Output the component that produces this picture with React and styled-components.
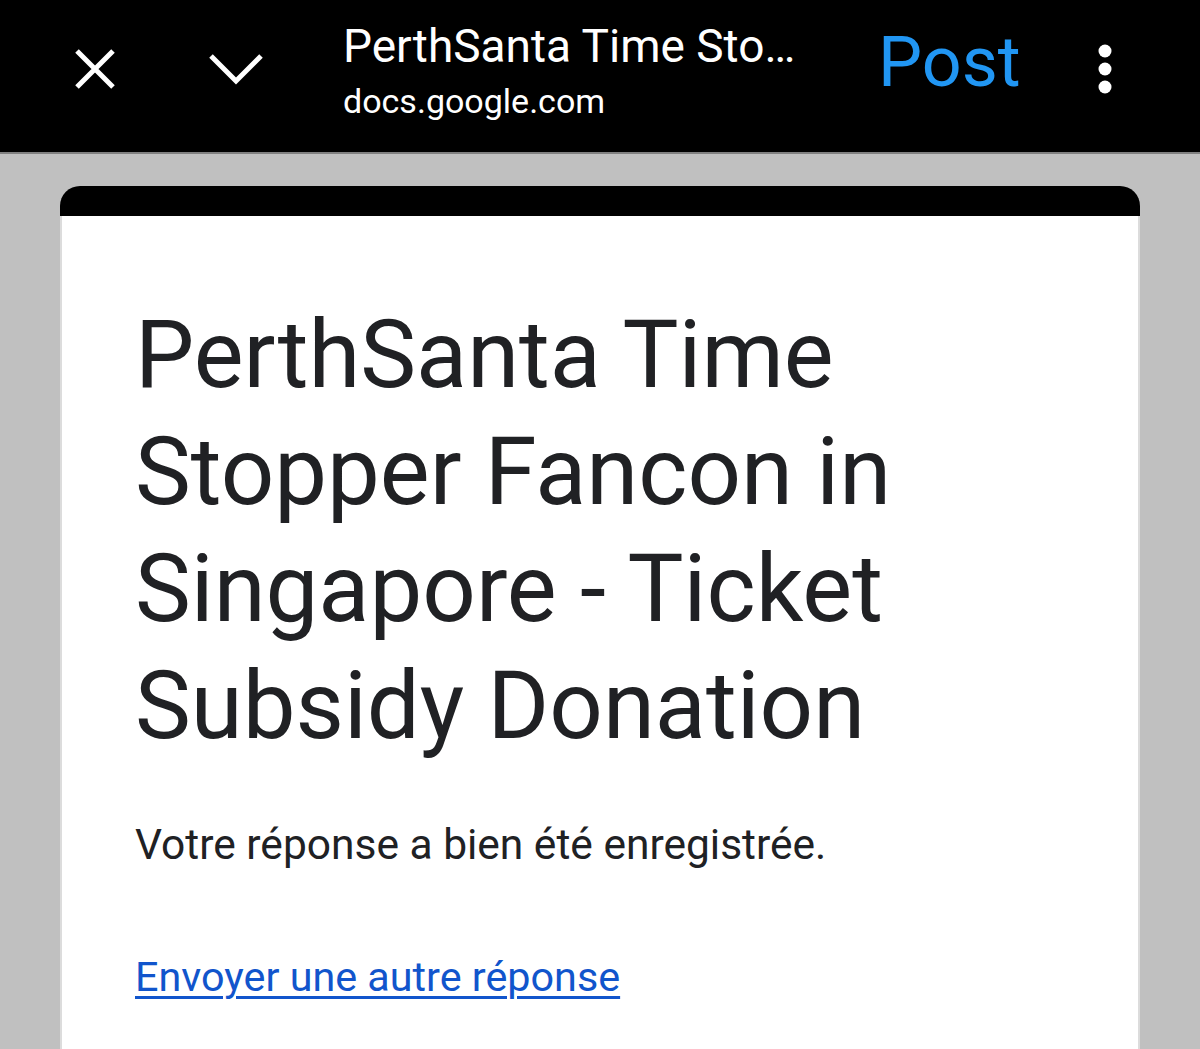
import React from 'react'
import styled, { createGlobalStyle } from 'styled-components'

const Global = createGlobalStyle`
  body {
    margin: 0;
    background: #c0c0c0;
    font-family: Roboto, "Noto Sans", sans-serif;
  }
`

const Page = styled.div`
  width: 1200px;
  height: 1049px;
  overflow: hidden;
  background: #c0c0c0;
`

const TopBar = styled.header`
  height: 152px;
  background: #000;
  border-bottom: 2px solid #808080;
  display: flex;
  align-items: flex-start;
  padding-left: 47px;
  box-sizing: content-box;
`

const IconButton = styled.div`
  width: ${p => p.w || 96}px;
  height: 138px;
  display: flex;
  align-items: center;
  justify-content: center;
  margin-left: ${p => p.gap || 0}px;
  color: #fff;
`

const TitleBlock = styled.div`
  width: 535px;
  margin-left: 59px;
  padding-top: 20px;
  display: flex;
  flex-direction: column;
  gap: 9px;
  color: #fff;
`

const PageTitle = styled.div`
  font-size: 46px;
  line-height: 52px;
  white-space: nowrap;
`

const PageHost = styled.div`
  font-size: 34px;
  line-height: 40px;
`

const PostButton = styled.div`
  margin-top: 27px;
  font-size: 70px;
  line-height: 70px;
  color: #2196f3;
  width: 140px;
`

const Card = styled.main`
  margin: 32px 60px 0;
  width: 1080px;
`

const CardTop = styled.div`
  height: 30px;
  background: #000;
  border-radius: 20px 20px 0 0;
`

const CardBody = styled.div`
  background: #fff;
  border-left: 2px solid #dcdcdc;
  border-right: 2px solid #dcdcdc;
  padding: 81px 73px 200px;
  color: #202124;
`

const FormTitle = styled.h1`
  margin: 0;
  font-weight: 400;
  font-size: 94px;
  line-height: 117px;
  width: 800px;
`

const Confirmation = styled.p`
  margin: 50px 0 0;
  font-size: 42.5px;
  line-height: 59px;
`

const AnotherLink = styled.a`
  display: inline-block;
  margin-top: 74px;
  font-size: 41.3px;
  line-height: 59px;
  color: #1155cc;
  text-decoration: underline;
  text-decoration-thickness: 3px;
  text-underline-offset: 5px;
`

const CloseIcon = () => (
  <svg width="44" height="44" viewBox="0 0 44 44">
    <path d="M4 4 L40 40 M40 4 L4 40" stroke="#fff" strokeWidth="5" fill="none" />
  </svg>
)

const ChevronIcon = () => (
  <svg width="56" height="32" viewBox="0 0 56 32">
    <path d="M3 3 L28 28 L53 3" stroke="#fff" strokeWidth="5" fill="none" />
  </svg>
)

const MenuIcon = () => (
  <svg width="20" height="56" viewBox="0 0 20 56">
    <circle cx="10" cy="10" r="6.5" fill="#fff" />
    <circle cx="10" cy="28" r="6.5" fill="#fff" />
    <circle cx="10" cy="46" r="6.5" fill="#fff" />
  </svg>
)

export default function App() {
  return (
    <Page>
      <Global />
      <TopBar>
        <IconButton><CloseIcon /></IconButton>
        <IconButton gap={45}><ChevronIcon /></IconButton>
        <TitleBlock>
          <PageTitle>PerthSanta Time Sto…</PageTitle>
          <PageHost>docs.google.com</PageHost>
        </TitleBlock>
        <PostButton>Post</PostButton>
        <IconButton w={48} gap={63}><MenuIcon /></IconButton>
      </TopBar>
      <Card>
        <CardTop />
        <CardBody>
          <FormTitle>PerthSanta Time Stopper Fancon in Singapore - Ticket Subsidy Donation</FormTitle>
          <Confirmation>Votre réponse a bien été enregistrée.</Confirmation>
          <AnotherLink href="#">Envoyer une autre réponse</AnotherLink>
        </CardBody>
      </Card>
    </Page>
  )
}
